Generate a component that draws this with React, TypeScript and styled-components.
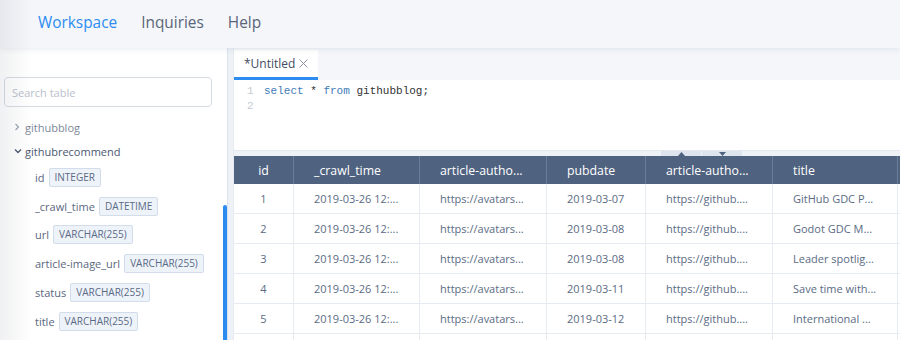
import React from "react";
import styled, { createGlobalStyle } from "styled-components";

const GlobalStyle = createGlobalStyle`
  html, body { margin: 0; padding: 0; }
  body { font-family: "Open Sans", "Noto Sans", sans-serif; background: #fff; }
  * { box-sizing: border-box; }
`;

const Page = styled.div`
  position: relative;
  width: 900px;
  height: 340px;
  overflow: hidden;
  display: flex;
  flex-direction: column;
  background: #fff;
`;

const EdgeShade = styled.div`
  position: absolute;
  left: 0;
  top: 0;
  bottom: 0;
  width: 32px;
  background: linear-gradient(to right, rgba(40, 50, 70, 0.07), rgba(40, 50, 70, 0));
  pointer-events: none;
  z-index: 5;
`;

const TopNav = styled.nav`
  position: relative;
  z-index: 2;
  height: 48px;
  flex: none;
  display: flex;
  align-items: center;
  padding: 0 0 3px 26px;
  background: #f4f6fa;
  box-shadow: 0 1px 6px rgba(30, 50, 90, 0.1);
`;

const NavItem = styled.span<{ $active?: boolean }>`
  padding: 0 12px;
  font-size: 15.4px;
  color: ${(p) => (p.$active ? "#2d8cf0" : "#5a6578")};
`;

const Body = styled.div`
  display: flex;
  flex: 1;
  min-height: 0;
`;

const Sidebar = styled.aside`
  width: 227px;
  flex: none;
  display: flex;
  background: #fff;
`;

const SidebarContent = styled.div`
  flex: 1;
  min-width: 0;
  padding: 29px 0 0 4px;
`;

const SearchInput = styled.input`
  display: block;
  width: 208px;
  height: 30px;
  border: 1px solid #d6dce5;
  border-radius: 4px;
  padding: 0 7px;
  font-family: inherit;
  font-size: 11px;
  color: #515a6e;
  outline: none;
  &::placeholder { color: #b9c0cb; }
`;

const TreeList = styled.div`
  margin-top: 8px;
`;

const TreeRow = styled.div<{ $open?: boolean }>`
  height: 24px;
  display: flex;
  align-items: center;
  padding-left: 10px;
  font-size: 11px;
  color: ${(p) => (p.$open ? "#4a5770" : "#7d8799")};
`;

const Chevron = styled.span`
  width: 11px;
  height: 24px;
  display: flex;
  align-items: center;
  flex: none;
`;

const FieldRow = styled.div`
  height: 28.8px;
  display: flex;
  align-items: center;
  gap: 4px;
  padding-left: 31px;
  font-size: 11px;
  color: #5b6780;
`;

const TypeBadge = styled.span`
  height: 19px;
  line-height: 17px;
  padding: 0 5px;
  border: 1px solid #d2dcea;
  border-radius: 2px;
  background: #eef3fa;
  font-size: 10px;
  color: #5a6a85;
`;

const ScrollTrack = styled.div`
  width: 4px;
  flex: none;
  padding-top: 157px;
`;

const ScrollThumb = styled.div`
  height: 100%;
  background: #2d8cf0;
  border-radius: 2px 2px 0 0;
`;

const VSplitter = styled.div`
  width: 7px;
  flex: none;
  background: #eef2f7;
  border-left: 1px solid #dde3ec;
  border-right: 1px solid #e6ebf2;
`;

const Main = styled.main`
  flex: 1;
  min-width: 0;
  display: flex;
  flex-direction: column;
  background: #f4f6fa;
`;

const TabBar = styled.div`
  height: 32px;
  flex: none;
  display: flex;
  align-items: flex-end;
`;

const Tab = styled.div`
  width: 84px;
  height: 30px;
  display: flex;
  align-items: center;
  gap: 4px;
  padding: 0 0 0 10px;
  background: #fff;
  border-bottom: 3px solid #2d8cf0;
  font-size: 12px;
  color: #3f4b62;
`;

const Editor = styled.div`
  height: 70px;
  flex: none;
  background: #fff;
  padding-top: 4px;
  font-family: "Liberation Mono", "DejaVu Sans Mono", monospace;
  font-size: 11px;
`;

const CodeLine = styled.div`
  display: flex;
  height: 15px;
  line-height: 15px;
`;

const Gutter = styled.span`
  width: 30px;
  padding-left: 13px;
  color: #c6cbd3;
  flex: none;
`;

const Code = styled.span`
  color: #333;
  white-space: pre;
`;

const Keyword = styled.span`
  color: #3e7cb8;
`;

const HSplitter = styled.div`
  height: 6px;
  flex: none;
  display: flex;
  padding-left: 426px;
  background: #eef2f7;
  border-top: 1px solid #e3e8ef;
`;

const SplitButton = styled.div`
  width: 41px;
  height: 100%;
  display: flex;
  align-items: center;
  justify-content: center;
  background: #dde4ee;
  border-left: 1px solid #eef2f7;
`;

const Table = styled.div`
  flex: 1;
  min-height: 0;
  overflow: hidden;
  background: #fff;
`;

const COLS = "59px 126px 127px 99px 127px 125px 160px";

const HeadRow = styled.div`
  display: grid;
  grid-template-columns: ${COLS};
  height: 28px;
  background: #4f6280;
`;

const HeadCell = styled.div<{ $center?: boolean }>`
  display: flex;
  align-items: center;
  justify-content: ${(p) => (p.$center ? "center" : "flex-start")};
  padding-left: ${(p) => (p.$center ? "0" : "20px")};
  border-left: 1px solid #6b7c96;
  font-size: 12.3px;
  color: #fff;
  white-space: nowrap;
  &:first-child { border-left: none; }
`;

const BodyRow = styled.div`
  display: grid;
  grid-template-columns: ${COLS};
  height: 30px;
`;

const BodyCell = styled.div<{ $center?: boolean }>`
  display: flex;
  align-items: center;
  justify-content: ${(p) => (p.$center ? "center" : "flex-start")};
  padding-left: ${(p) => (p.$center ? "0" : "20px")};
  border-left: 1px solid #e6ebf2;
  border-bottom: 1px solid #e6ebf2;
  font-size: 11px;
  color: #5b6b84;
  white-space: nowrap;
  &:first-child { border-left: none; }
`;

const headers = ["id", "_crawl_time", "article-autho...", "pubdate", "article-autho...", "title", ""];

const rows = [
  ["1", "2019-03-26 12:...", "https://avatars...", "2019-03-07", "https://github....", "GitHub GDC P...", ""],
  ["2", "2019-03-26 12:...", "https://avatars...", "2019-03-08", "https://github....", "Godot GDC M...", ""],
  ["3", "2019-03-26 12:...", "https://avatars...", "2019-03-08", "https://github....", "Leader spotlig...", ""],
  ["4", "2019-03-26 12:...", "https://avatars...", "2019-03-11", "https://github....", "Save time with...", ""],
  ["5", "2019-03-26 12:...", "https://avatars...", "2019-03-12", "https://github....", "International ...", ""],
  ["", "", "", "", "", "", ""],
];

const fields: [string, string][] = [
  ["id", "INTEGER"],
  ["_crawl_time", "DATETIME"],
  ["url", "VARCHAR(255)"],
  ["article-image_url", "VARCHAR(255)"],
  ["status", "VARCHAR(255)"],
  ["title", "VARCHAR(255)"],
];

const ChevronRight = () => (
  <svg width="6" height="8" viewBox="0 0 6 8" fill="none">
    <path d="M1.5 1 L4.5 4 L1.5 7" stroke="#9aa3b2" strokeWidth="1.1" />
  </svg>
);

const ChevronDown = () => (
  <svg width="8" height="6" viewBox="0 0 8 6" fill="none">
    <path d="M1 1.5 L4 4.5 L7 1.5" stroke="#4a5770" strokeWidth="1.3" />
  </svg>
);

const CloseIcon = () => (
  <svg width="9" height="9" viewBox="0 0 9 9" fill="none">
    <path d="M0.5 0.5 L8.5 8.5 M8.5 0.5 L0.5 8.5" stroke="#8b95a5" strokeWidth="1" />
  </svg>
);

const Triangle = ({ up }: { up?: boolean }) => (
  <svg width="7" height="4" viewBox="0 0 7 4">
    <path d={up ? "M0 4 L3.5 0 L7 4 Z" : "M0 0 L3.5 4 L7 0 Z"} fill="#4f6280" />
  </svg>
);

export default function App() {
  return (
    <>
      <GlobalStyle />
      <Page>
        <EdgeShade />
        <TopNav>
          <NavItem $active>Workspace</NavItem>
          <NavItem>Inquiries</NavItem>
          <NavItem>Help</NavItem>
        </TopNav>
        <Body>
          <Sidebar>
            <SidebarContent>
              <SearchInput placeholder="Search table" />
              <TreeList>
                <TreeRow>
                  <Chevron>
                    <ChevronRight />
                  </Chevron>
                  githubblog
                </TreeRow>
                <TreeRow $open>
                  <Chevron>
                    <ChevronDown />
                  </Chevron>
                  githubrecommend
                </TreeRow>
                {fields.map(([name, type]) => (
                  <FieldRow key={name}>
                    {name}
                    <TypeBadge>{type}</TypeBadge>
                  </FieldRow>
                ))}
              </TreeList>
            </SidebarContent>
            <ScrollTrack>
              <ScrollThumb />
            </ScrollTrack>
          </Sidebar>
          <VSplitter />
          <Main>
            <TabBar>
              <Tab>
                *Untitled
                <CloseIcon />
              </Tab>
            </TabBar>
            <Editor>
              <CodeLine>
                <Gutter>1</Gutter>
                <Code>
                  <Keyword>select</Keyword> * <Keyword>from</Keyword> githubblog;
                </Code>
              </CodeLine>
              <CodeLine>
                <Gutter>2</Gutter>
                <Code />
              </CodeLine>
            </Editor>
            <HSplitter>
              <SplitButton>
                <Triangle up />
              </SplitButton>
              <SplitButton>
                <Triangle />
              </SplitButton>
            </HSplitter>
            <Table>
              <HeadRow>
                {headers.map((h, i) => (
                  <HeadCell key={i} $center={i === 0}>
                    {h}
                  </HeadCell>
                ))}
              </HeadRow>
              {rows.map((r, ri) => (
                <BodyRow key={ri}>
                  {r.map((c, ci) => (
                    <BodyCell key={ci} $center={ci === 0}>
                      {c}
                    </BodyCell>
                  ))}
                </BodyRow>
              ))}
            </Table>
          </Main>
        </Body>
      </Page>
    </>
  );
}
